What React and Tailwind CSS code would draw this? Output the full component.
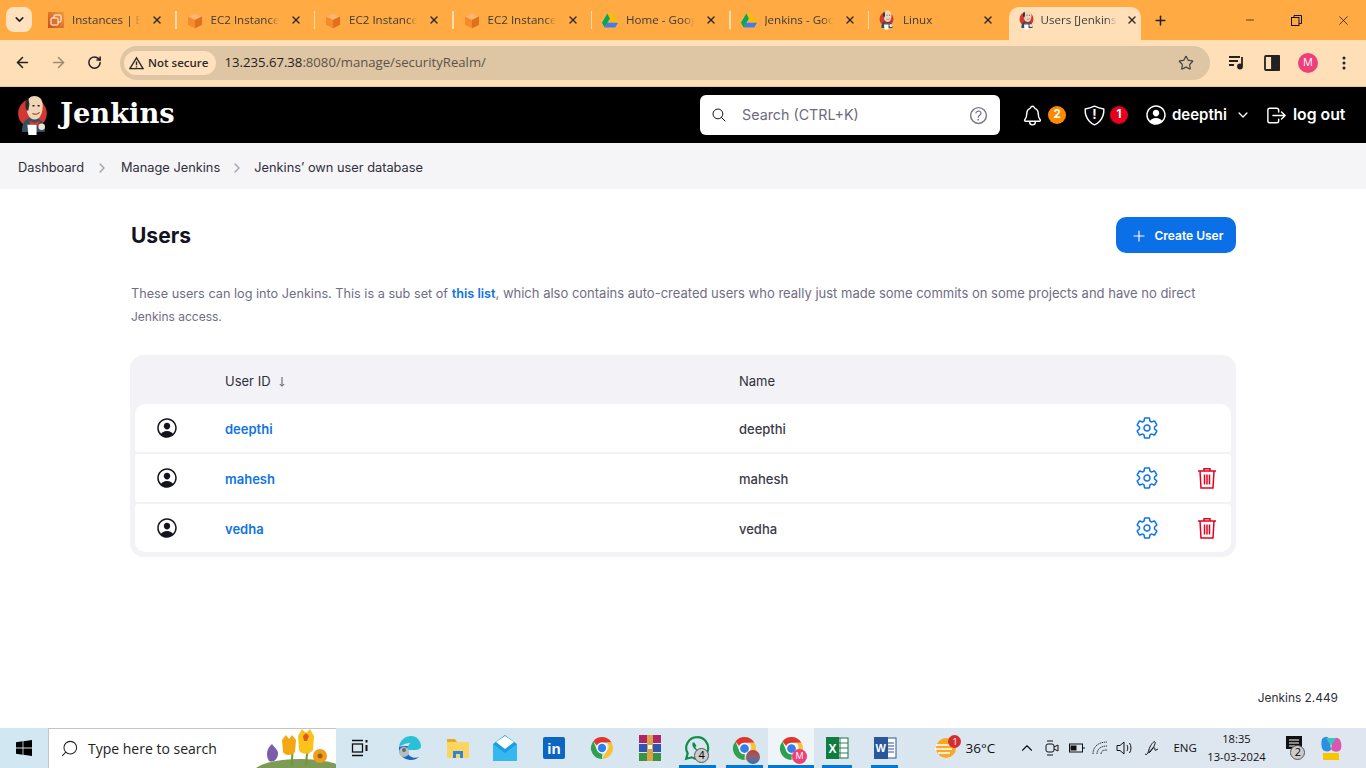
import React from "react";
import { ArrowLeft, ArrowRight, RotateCw, Star, ChevronDown, Plus, Minus, X, Search, ChevronUp } from "lucide-react";
import { IoSettingsOutline, IoNotificationsOutline, IoSearchOutline, IoHelpCircleOutline, IoPersonCircleOutline, IoChevronDownOutline, IoLogOutOutline, IoAddOutline, IoChevronForwardOutline, IoShieldOutline } from "react-icons/io5";

const Cube = () => (
  <svg width="17" height="17" viewBox="0 0 16 16"><path d="M8 0.500 15 4v8.200L8 15.800 1 12.200V4z" fill="#f58b2b"/><path d="M8 0.500 15 4 8 7.500 1 4z" fill="#fbb56c"/><path d="M8 7.500v8.300l7-3.600V4z" fill="#e0701c"/></svg>
);
const AwsInst = () => (
  <svg width="16" height="16" viewBox="0 0 16 16"><defs><linearGradient id="aw" x1="0" y1="1" x2="1" y2="0"><stop offset="0" stopColor="#c8511b"/><stop offset="1" stopColor="#f79a3a"/></linearGradient></defs><rect width="16" height="16" fill="url(#aw)"/><rect x="6" y="3" width="7" height="7" rx="1" fill="none" stroke="#fff" strokeWidth="1"/><rect x="3" y="6" width="7" height="7" rx="1" fill="#dd7029" stroke="#fff" strokeWidth="1"/></svg>
);
const Drive = () => (
  <svg width="16" height="15" viewBox="0 0 16 14"><path d="M5.300 0h5.400l5.300 9h-5.300z" fill="#fbbc04"/><path d="M5.300 0 0 9.200 2.700 14l5.200-9z" fill="#00a85b"/><path d="M5.300 9.200H16L13.300 14H2.700z" fill="#3f7ee8"/></svg>
);
const JenkinsHead = ({ w = 16, h = 20 }) => (
  <svg width={w} height={h} viewBox="0 0 30 40">
    <circle cx="14" cy="18" r="14" fill="#d33833"/>
    <path d="M4 36c-1-8 3-14 10-14s12 5 12 12v2z" fill="#335061"/>
    <path d="M8 11C8 4 12 1 16 1s8 3 8 9c0 7-2 14-8 14-5 0-8-6-8-13z" fill="#f0d6b7"/>
    <path d="M8 15C6 10 7 5 10 3l1 6-1 6z" fill="#2c2c2c"/>
    <path d="M14 10.500h2M19 10.500h2" stroke="#222" strokeWidth="1.400"/>
    <path d="M14 18c2 1 5 1 7-1" stroke="#8a4a35" strokeWidth="1" fill="none"/>
    <path d="M11 25l5 2 5-2-1 5-4-2-4 2z" fill="#e0312c"/>
    <path d="M9 29h9v10H10z" fill="#fff"/>
    <circle cx="23" cy="31" r="3.200" fill="#f0e3d2"/>
  </svg>
);

const tabs = [
  { icon: <AwsInst />, t: "Instances | EC2" },
  { icon: <Cube />, t: "EC2 Instance Connect" },
  { icon: <Cube />, t: "EC2 Instance Connect" },
  { icon: <Cube />, t: "EC2 Instance Connect" },
  { icon: <Drive />, t: "Home - Google Drive" },
  { icon: <Drive />, t: "Jenkins - Google Drive" },
  { icon: <JenkinsHead />, t: "Linux" },
];

function Tab({ icon, t, last }) {
  return (
    <div className="relative h-[40px] w-[138.5px] shrink-0 flex items-center pl-[10px]">
      <span className="w-[16px] flex justify-center shrink-0">{icon}</span>
      <span className="ml-[8px] w-[68px] overflow-hidden whitespace-nowrap text-[11.600px] text-[#3c3c3c] [mask-image:linear-gradient(to_right,black_85%,transparent)]">{t}</span>
      <X size={12} strokeWidth={2.800} className="ml-[11px] text-[#2b2b2b] shrink-0" />
      {!last && <span className="absolute right-0 top-[11px] h-[18px] w-[1.500px] bg-[#ffdcae]" />}
    </div>
  );
}

function Chrome({ size = 24, badge }) {
  return (
    <span className="relative inline-flex">
      <svg width={size} height={size} viewBox="0 0 24 24">
        <path d="M12 1a11 11 0 0 1 9.500 5.500H12a5.500 5.500 0 0 0-5 3.200L3.300 5.200A11 11 0 0 1 12 1z" fill="#e0362c"/>
        <path d="M21.500 6.500A11 11 0 0 1 12 23l4.800-8.200a5.500 5.500 0 0 0 0-8.300z" fill="#fbc02d"/>
        <path d="M12 23A11 11 0 0 1 3.300 5.200L7.200 14.800a5.500 5.500 0 0 0 5.200 2.700z" fill="#2fa04e"/>
        <circle cx="12" cy="12" r="5.400" fill="#fff"/><circle cx="12" cy="12" r="4.200" fill="#2f80ed"/>
      </svg>
      {badge}
    </span>
  );
}

const TaskSlot = ({ w, children, line, active }) => (
  <div className={`relative h-[40px] flex items-center justify-center shrink-0 ${w} ${active ? "bg-[#eef4f8]" : ""}`}>
    {children}
    {line && <span className={`absolute bottom-0 h-[3px] bg-[#0078d4] ${active ? "left-0 right-0" : "left-[5px] right-[5px]"}`} />}
  </div>
);

const Count = ({ n, cls }) => (
  <span className={`absolute flex items-center justify-center rounded-full border border-[#555] bg-[#ccc] text-[11px] text-black h-[15px] w-[15px] ${cls}`}>{n}</span>
);

function Taskbar() {
  return (
    <div className="h-[40px] shrink-0 flex items-center bg-gradient-to-r from-[#d1e7f1] to-[#dfe6ef] font-['Open_Sans',sans-serif]">
      <div className="w-[48px] flex justify-center shrink-0">
        <svg width="16" height="16" viewBox="0 0 16 16" fill="#000"><path d="M0 2.200 6.600 1.300v6.300H0zM7.400 1.200 16 0v7.600H7.400zM0 8.400h6.600v6.300L0 13.800zM7.400 8.400H16V16l-8.600-1.200z"/></svg>
      </div>
      <div className="relative h-[40px] w-[288px] shrink-0 bg-white border-t border-l border-[#c4c4c4] flex items-center overflow-hidden">
        <Search size={19} strokeWidth={1.300} className="ml-[11px] text-[#222] -scale-x-100" />
        <span className="ml-[9px] text-[14px] text-[#222]">Type here to search</span>
        <svg className="absolute right-0 bottom-0" width="82" height="40" viewBox="0 0 82 40">
          <ellipse cx="46" cy="44" rx="46" ry="13" fill="#7d9a57"/>
          <path d="M18 16c-6 5-6 12-3 17 5 2 9-2 9-8 0-3-3-5-6-9z" fill="#7a5ea8"/>
          <path d="M38 38c0-8 0-12 1-18M52 38c0-10 2-16 3-20" stroke="#6c9a3a" strokeWidth="2" fill="none"/>
          <path d="M28 12l4-5 3 4 3-4 4 5-1 12c-3 4-10 4-12 0z" fill="#f3a712"/>
          <path d="M44 8l4-7 4 4 4-4 4 7-1 14c-3 5-12 5-14 0z" fill="#f9c31b"/>
          <path d="M49 8l3-3 3 3-2 5h-3z" fill="#e2571e"/>
          <circle cx="66" cy="28" r="7" fill="#ea9f1d"/><circle cx="66" cy="28" r="2.500" fill="#a85c12"/>
        </svg>
      </div>
      <TaskSlot w="w-[48px]">
        <svg width="18" height="18" viewBox="0 0 18 18" fill="none" stroke="#111" strokeWidth="1.300"><path d="M1 1.500h11M1 16.500h11"/><rect x="1.500" y="5" width="10" height="8"/><path d="M15.500 1v2.500M15.500 6v6" strokeWidth="2"/></svg>
      </TaskSlot>
      <div className="w-[2px] shrink-0" />
      <TaskSlot w="w-[47.8px]">
        <svg width="24" height="26" viewBox="0 0 24 26"><path d="M1 12C2 5 7 1 13 1c6 0 10 5 10 10 0 3-3 4-6 4H9c0-4 3-6 3-7-5 0-9 3-11 4z" fill="#2cc0d6"/><path d="M1 12c-1 8 5 13 12 13 3 0 6-1 8-3-5 2-11 0-12-6 0-2 0-3 1-5-4 0-7 0-9 1z" fill="#1a66c4"/><circle cx="6" cy="17" r="5" fill="#b8bcc0"/><circle cx="6" cy="15" r="2" fill="#666"/></svg>
      </TaskSlot>
      <TaskSlot w="w-[47.8px]">
        <svg width="22" height="20" viewBox="0 0 22 20"><path d="M0 2a1 1 0 0 1 1-1h7l2 3H0z" fill="#e8a820"/><rect y="4" width="22" height="16" rx="1" fill="#fcd462"/><path d="M6 13h10v7h-3v-4H9v4H6z" fill="#2b88d8"/></svg>
      </TaskSlot>
      <TaskSlot w="w-[47.8px]">
        <svg width="24" height="26" viewBox="0 0 24 26"><path d="M0 9 12 0l12 9v17H0z" fill="#1b9ede"/><path d="M0 9l12 9 12-9v17H0z" fill="#35b8f0"/><path d="M3 7l9-6 9 6-9 7z" fill="#fff"/></svg>
      </TaskSlot>
      <TaskSlot w="w-[49px]">
        <span className="flex h-[22px] w-[22px] items-center justify-center rounded-[2px] bg-[#0a66c2] text-[15px] font-bold leading-none text-white font-['Liberation_Sans',sans-serif]">in</span>
      </TaskSlot>
      <TaskSlot w="w-[47.8px]"><Chrome /></TaskSlot>
      <TaskSlot w="w-[48px]">
        <svg width="24" height="26" viewBox="0 0 24 26"><rect x="1" y="0" width="22" height="8" fill="#b0246a"/><rect x="1" y="9" width="22" height="8" fill="#3155b5"/><rect x="1" y="18" width="22" height="8" fill="#3d9147"/><rect x="9" y="0" width="6" height="26" fill="#d9a441"/><rect x="10" y="10" width="4" height="4" fill="#fff"/></svg>
      </TaskSlot>
      <TaskSlot w="w-[46.5px]" line>
        <svg width="26" height="26" viewBox="0 0 24 24"><path d="M12 2a10 10 0 0 0-8.600 15L2 22l5.200-1.400A10 10 0 1 0 12 2z" fill="none" stroke="#128c4a" strokeWidth="2"/><path d="M8 7c-1 2 0 5 3 7s5 3 6 1l-2-2-1.500 1c-1 0-3-2-3-3l1-1-2-3z" fill="#128c4a"/></svg>
        <Count n="4" cls="left-[20px] bottom-[5px]" />
      </TaskSlot>
      <TaskSlot w="w-[47.8px]" line>
        <Chrome size={25} badge={<span className="absolute -right-[3px] -bottom-[3px] h-[14px] w-[14px] rounded-full bg-gradient-to-b from-[#c0392b] to-[#1f6fb5]" />} />
      </TaskSlot>
      <TaskSlot w="w-[46px]" line active>
        <Chrome size={25} badge={<span className="absolute -right-[3px] -bottom-[3px] flex h-[15px] w-[15px] items-center justify-center rounded-full bg-[#ec407a] text-[9px] text-white">M</span>} />
      </TaskSlot>
      <div className="w-[3px] shrink-0" />
      <TaskSlot w="w-[40px]" line>
        <svg width="24" height="24" viewBox="0 0 24 24"><rect x="7" y="2" width="16" height="20" fill="#fff" stroke="#1d7044"/><path d="M15 2v20M7 7h16M7 12h16M7 17h16" stroke="#1d7044" strokeWidth=".9"/><rect x="1" y="1" width="13" height="22" fill="#107c41"/></svg>
        <span className="absolute left-[11px] top-[12px] text-[12px] font-bold text-white font-['Liberation_Sans',sans-serif]">X</span>
      </TaskSlot>
      <div className="w-[9px] shrink-0" />
      <TaskSlot w="w-[37px]" line>
        <svg width="24" height="24" viewBox="0 0 24 24"><rect x="7" y="2" width="16" height="20" fill="#fff" stroke="#2b579a"/><path d="M10 7h11M10 10h11M10 13h11M10 16h11" stroke="#2b579a"/><rect x="1" y="1" width="14" height="22" fill="#2b579a"/></svg>
        <span className="absolute left-[9px] top-[12px] text-[11px] font-bold text-white font-['Liberation_Sans',sans-serif]">W</span>
      </TaskSlot>
      <div className="w-[32px] shrink-0" />
      <span className="relative w-[24px] h-[24px] shrink-0">
        <svg width="22" height="24" viewBox="0 0 22 24"><circle cx="11" cy="12" r="10" fill="#f9a825"/><path d="M1 9h14M0 13h17M3 17h12" stroke="#fff" strokeWidth="1.600"/></svg>
        <span className="absolute -right-[2px] -top-[1px] flex h-[13px] w-[13px] items-center justify-center rounded-full bg-[#d32f2f] text-[9px] text-white">1</span>
      </span>
      <span className="ml-[6px] text-[13.500px] text-[#111] w-[47px]">36°C</span>
      <ChevronUp size={18} strokeWidth={1.500} className="ml-[6px] text-[#111] shrink-0" />
      <svg className="ml-[8px] shrink-0" width="16" height="18" viewBox="0 0 16 18" fill="none" stroke="#111"><rect x="2" y="5" width="8" height="8" rx="2"/><path d="M10 8l4-2v6l-4-2M3 2h6M3 16h6"/></svg>
      <svg className="ml-[9px] shrink-0" width="16" height="12" viewBox="0 0 16 12" fill="none" stroke="#111"><rect x=".5" y="2" width="13" height="8"/><rect x="2" y="4" width="5" height="4" fill="#111"/><path d="M15 5v2"/></svg>
      <svg className="ml-[7px] shrink-0" width="16" height="14" viewBox="0 0 16 14" fill="none" stroke="#333"><path d="M1 13C1 6 6 1 15 1M5 13c0-5 4-8 10-8M9 13c0-3 2-4 6-4" strokeDasharray="1.500 .7"/></svg>
      <svg className="ml-[8px] shrink-0" width="18" height="16" viewBox="0 0 18 16" fill="none" stroke="#111"><path d="M1 5.500h3L8 2v12l-4-3.500H1zM11 5c1 2 1 4 0 6M13.500 3c2 3 2 7 0 10"/></svg>
      <svg className="ml-[9px] shrink-0" width="18" height="18" viewBox="0 0 18 18" fill="none" stroke="#111"><path d="M2 15c3 2 3-3 5-7s4-6 5-5-2 7-5 10 0-2 3-4 1 4 3 2l2-1"/></svg>
      <span className="ml-[12px] w-[27px] text-[11.500px] text-[#111]">ENG</span>
      <div className="ml-[2px] w-[68px] shrink-0 flex flex-col items-center text-[11.200px] leading-[18px] text-[#111]">
        <span>18:35</span>
        <span>13-03-2024</span>
      </div>
      <span className="relative ml-[16px] w-[20px] h-[24px] shrink-0">
        <svg width="16" height="18" viewBox="0 0 16 18"><path d="M0 0h16v13H8l-3 4v-4H0z" fill="#111"/><path d="M3 4h10M3 7h10M3 10h6" stroke="#fff"/></svg>
        <Count n="2" cls="left-[4px] top-[9px]" />
      </span>
      <svg className="ml-[14px] shrink-0" width="22" height="24" viewBox="0 0 22 24"><path d="M2 3c3-3 6-3 7 0l2 10c0 3-6 3-8 1-2-3-2-8-1-11z" fill="#2d8fe0"/><path d="M20 4c-2-3-6-3-7 0l-2 9c2 4 9 3 10 0 1-4 0-7-1-9z" fill="#d957b3"/><path d="M6 2l5 8 5-8" fill="#38c6b9"/><rect x="3" y="17" width="16" height="7" fill="#f7c600"/></svg>
    </div>
  );
}

const Trash = () => (
  <svg width="20" height="22" viewBox="0 0 20 22" fill="none" stroke="#e6001f" strokeWidth="1.500"><path d="M1 4h18M7 4V1.700h6V4M3 4l1 17h12l1-17M7.500 7.500v10M10 7.500v10M12.500 7.500v10"/></svg>
);

const users = ["deepthi", "mahesh", "vedha"];

function UserRow({ name, i }) {
  const rounded = i === 0 ? "rounded-t-[10px] rounded-b-[3px]" : i === 2 ? "rounded-b-[10px] rounded-t-[3px]" : "rounded-[3px]";
  return (
    <div className={`grid h-[48px] grid-cols-[90px_514px_378px_60px_54px] items-center bg-white ${rounded}`}>
      <span className="flex justify-center pr-[26px]"><IoPersonCircleOutline size={24} className="text-[#14141f]" /></span>
      <a className="pt-[3px] text-[13px] font-semibold text-[#0f74e6]">{name}</a>
      <span className="pt-[3px] text-[13px] font-medium text-[#3a3a48]">{name}</span>
      <span className="flex justify-center"><IoSettingsOutline size={24} className="text-[#0f74e6]" /></span>
      <span className="flex justify-center pl-[6px]">{i > 0 && <Trash />}</span>
    </div>
  );
}

export default function App() {
  return (
    <div className="h-screen w-full overflow-hidden flex flex-col bg-white font-['Inter',sans-serif]">
      {/* tab strip */}
      <div className="h-[40px] shrink-0 flex bg-[#ffaa42] font-['Open_Sans',sans-serif]">
        <div className="w-[38px] shrink-0 pl-[6px] pt-[7px]">
          <div className="flex h-[25px] w-[26px] items-center justify-center rounded-[8px] bg-[#ffe2bd]">
            <ChevronDown size={13} strokeWidth={3} className="text-[#222]" />
          </div>
        </div>
        {tabs.map((tb, i) => <Tab key={i} {...tb} last={i === 6} />)}
        <div className="mt-[7px] ml-[1px] h-[33px] w-[132px] shrink-0 rounded-t-[10px] bg-[#ffdfb8] flex items-center pl-[9px] pb-[7px]">
          <JenkinsHead w={18} h={20} />
          <span className="ml-[5px] w-[76px] overflow-hidden whitespace-nowrap text-[11.600px] text-[#3c3c3c] [mask-image:linear-gradient(to_right,black_85%,transparent)]">Users [Jenkins]</span>
          <X size={12} strokeWidth={2.800} className="ml-[9px] text-[#2b2b2b]" />
        </div>
        <Plus size={15} strokeWidth={2.400} className="ml-[12px] mt-[13px] text-[#222] shrink-0" />
        <Minus size={12} strokeWidth={1.400} className="ml-[76px] mt-[14px] text-[#111] shrink-0" />
        <svg className="ml-[35px] mt-[15px] shrink-0" width="11" height="11" viewBox="0 0 11 11" fill="none" stroke="#111"><rect x=".5" y="2.500" width="7.500" height="8"/><path d="M3 2.500V.5h7.500v8H8"/></svg>
        <X size={15} strokeWidth={1.200} className="ml-[34px] mt-[13px] text-[#111] shrink-0" />
      </div>
      {/* toolbar */}
      <div className="h-[47px] shrink-0 flex items-center bg-[#ffdfb8] border-b border-[#e4c49b] pb-[1px] font-['Open_Sans',sans-serif]">
        <ArrowLeft size={17} strokeWidth={2.200} className="ml-[14px] text-[#222] shrink-0" />
        <ArrowRight size={17} strokeWidth={2.200} className="ml-[19px] text-[#a08a70] shrink-0" />
        <RotateCw size={15} strokeWidth={2.400} className="ml-[20px] text-[#222] shrink-0" />
        <div className="ml-[18px] flex h-[34px] w-[1090px] shrink-0 items-center rounded-full bg-[#dec5a3] pl-[4px]">
          <div className="flex h-[24px] items-center rounded-full bg-[#ffe2bd] pl-[5px] pr-[8px] text-[11.500px] font-semibold text-[#2b2b2b]">
            <svg width="15" height="14" viewBox="0 0 16 14" fill="none" stroke="#2b2b2b" strokeWidth="1.500"><path d="M8 1.500 15 13H1z"/><path d="M8 5.500v4M8 10.500v1.200"/></svg>
            <span className="ml-[4px]">Not secure</span>
          </div>
          <span className="ml-[8px] text-[13.150px] text-[#5c5346]"><span className="text-[#1f1f1f]">13.235.67.38</span>:8080/manage/securityRealm/</span>
          <Star size={16} strokeWidth={1.800} className="ml-auto mr-[16px] text-[#444]" />
        </div>
        <svg className="ml-[18px] shrink-0" width="17" height="15" viewBox="0 0 17 15" fill="none" stroke="#222" strokeWidth="1.800"><path d="M1 2h11M1 6h9M1 10h5"/><path d="M14 2v9"/><circle cx="12" cy="11.500" r="2" fill="#222"/></svg>
        <svg className="ml-[19px] shrink-0" width="16" height="16" viewBox="0 0 16 16" fill="none" stroke="#222" strokeWidth="1.800"><rect x="1" y="1" width="14" height="14" rx="1"/><rect x="8" y="1" width="7" height="14" fill="#222"/></svg>
        <span className="ml-[18px] flex h-[20px] w-[20px] shrink-0 items-center justify-center rounded-full bg-[#ec407a] text-[11px] text-white">M</span>
        <svg className="ml-[24px] shrink-0" width="4" height="14" viewBox="0 0 4 14" fill="#222"><circle cx="2" cy="2" r="1.500"/><circle cx="2" cy="7" r="1.500"/><circle cx="2" cy="12" r="1.500"/></svg>
      </div>
      {/* Jenkins header */}
      <div className="h-[56px] shrink-0 flex items-center bg-black text-white">
        <div className="w-[700px] shrink-0 flex items-center pl-[18px]">
          <JenkinsHead w={31} h={41} />
          <span className="ml-[11px] pb-[2px] font-['DejaVu_Serif',serif] text-[27.300px] font-bold leading-none">Jenkins</span>
        </div>
        <div className="flex h-[40px] w-[300px] shrink-0 items-center rounded-[6px] bg-white pl-[11px] pr-[10px] text-[#6d6b7e]">
          <IoSearchOutline size={16} className="text-[#14141f]" />
          <span className="ml-[15px] text-[14.300px]">Search (CTRL+K)</span>
          <IoHelpCircleOutline size={23} className="ml-auto text-[#77758a]" />
        </div>
        <IoNotificationsOutline size={23} className="ml-[21px] shrink-0" />
        <span className="ml-[4px] flex h-[18px] w-[18px] shrink-0 items-center justify-center rounded-full bg-[#ff8a00] text-[11.500px] font-bold">2</span>
        <span className="relative ml-[17px] shrink-0 flex">
          <IoShieldOutline size={23} />
          <span className="absolute inset-0 flex items-center justify-center text-[13px] font-bold">!</span>
        </span>
        <span className="ml-[4px] flex h-[18px] w-[18px] shrink-0 items-center justify-center rounded-full bg-[#e6001f] text-[11.500px] font-bold">1</span>
        <IoPersonCircleOutline size={24} className="ml-[16px] shrink-0" />
        <span className="ml-[4px] text-[15px] font-semibold">deepthi</span>
        <IoChevronDownOutline size={14} className="ml-[9px] shrink-0" />
        <IoLogOutOutline size={23} className="ml-[15px] shrink-0" />
        <span className="ml-[5px] text-[15.800px] font-semibold">log out</span>
      </div>
      {/* breadcrumbs */}
      <div className="h-[46px] shrink-0 flex items-center bg-[#f5f5f8] pl-[18px] pt-[3px] text-[12.800px] font-normal text-[#2f2f3a]">
        <span>Dashboard</span>
        <IoChevronForwardOutline size={14} className="ml-[11px] mr-[12px] text-[#a0a0ae]" />
        <span>Manage Jenkins</span>
        <IoChevronForwardOutline size={14} className="ml-[10px] mr-[10px] text-[#a0a0ae]" />
        <span>Jenkins’ own user database</span>
      </div>
      {/* main */}
      <div className="flex-1 min-h-0 flex flex-col pl-[131px] pr-[130px]">
        <div className="mt-[28px] flex h-[36px] items-center justify-between">
          <h1 className="pt-[2px] text-[21px] font-bold text-[#14141f]">Users</h1>
          <button className="flex h-[36px] w-[120px] items-center justify-center rounded-[10px] bg-[#0b6fe8] pl-[1px] pt-[1px] text-[12px] font-semibold text-white">
            <IoAddOutline size={18} className="mr-[7px]" />Create User
          </button>
        </div>
        <p className="mt-[29px] text-[13px] leading-[23px] text-[#6f6d85]">
          <span className="text-[12.700px]">These users can log into Jenkins. This is a sub set of </span><a className="text-[12.700px] font-semibold text-[#0f74e6]">this list</a>, which also contains auto-created users who really just made some commits on some projects and have no direct<br /><span className="text-[12px]">Jenkins access.</span>
        </p>
        <div className="-ml-[1px] mt-[27px] rounded-[14px] bg-[#f3f3f7] px-[5px] pb-[5px]">
          <div className="grid h-[49px] grid-cols-[90px_514px_1fr] items-center pt-[4px] text-[13px] font-normal text-[#2f2f3a]">
            <span />
            <span className="flex items-center">User ID
              <svg className="ml-[8px]" width="6" height="10" viewBox="0 0 6 10" fill="none" stroke="#55556a"><path d="M3 0v9M.8 7 3 9.300 5.200 7"/></svg>
            </span>
            <span>Name</span>
          </div>
          <div className="flex flex-col gap-[2px]">
            {users.map((u, i) => <UserRow key={u} name={u} i={i} />)}
          </div>
        </div>
        <div className="mt-auto mb-[21px] -mr-[102px] text-right text-[11.900px] font-normal text-[#2f2f3a]">Jenkins 2.449</div>
      </div>
      <Taskbar />
    </div>
  );
}
